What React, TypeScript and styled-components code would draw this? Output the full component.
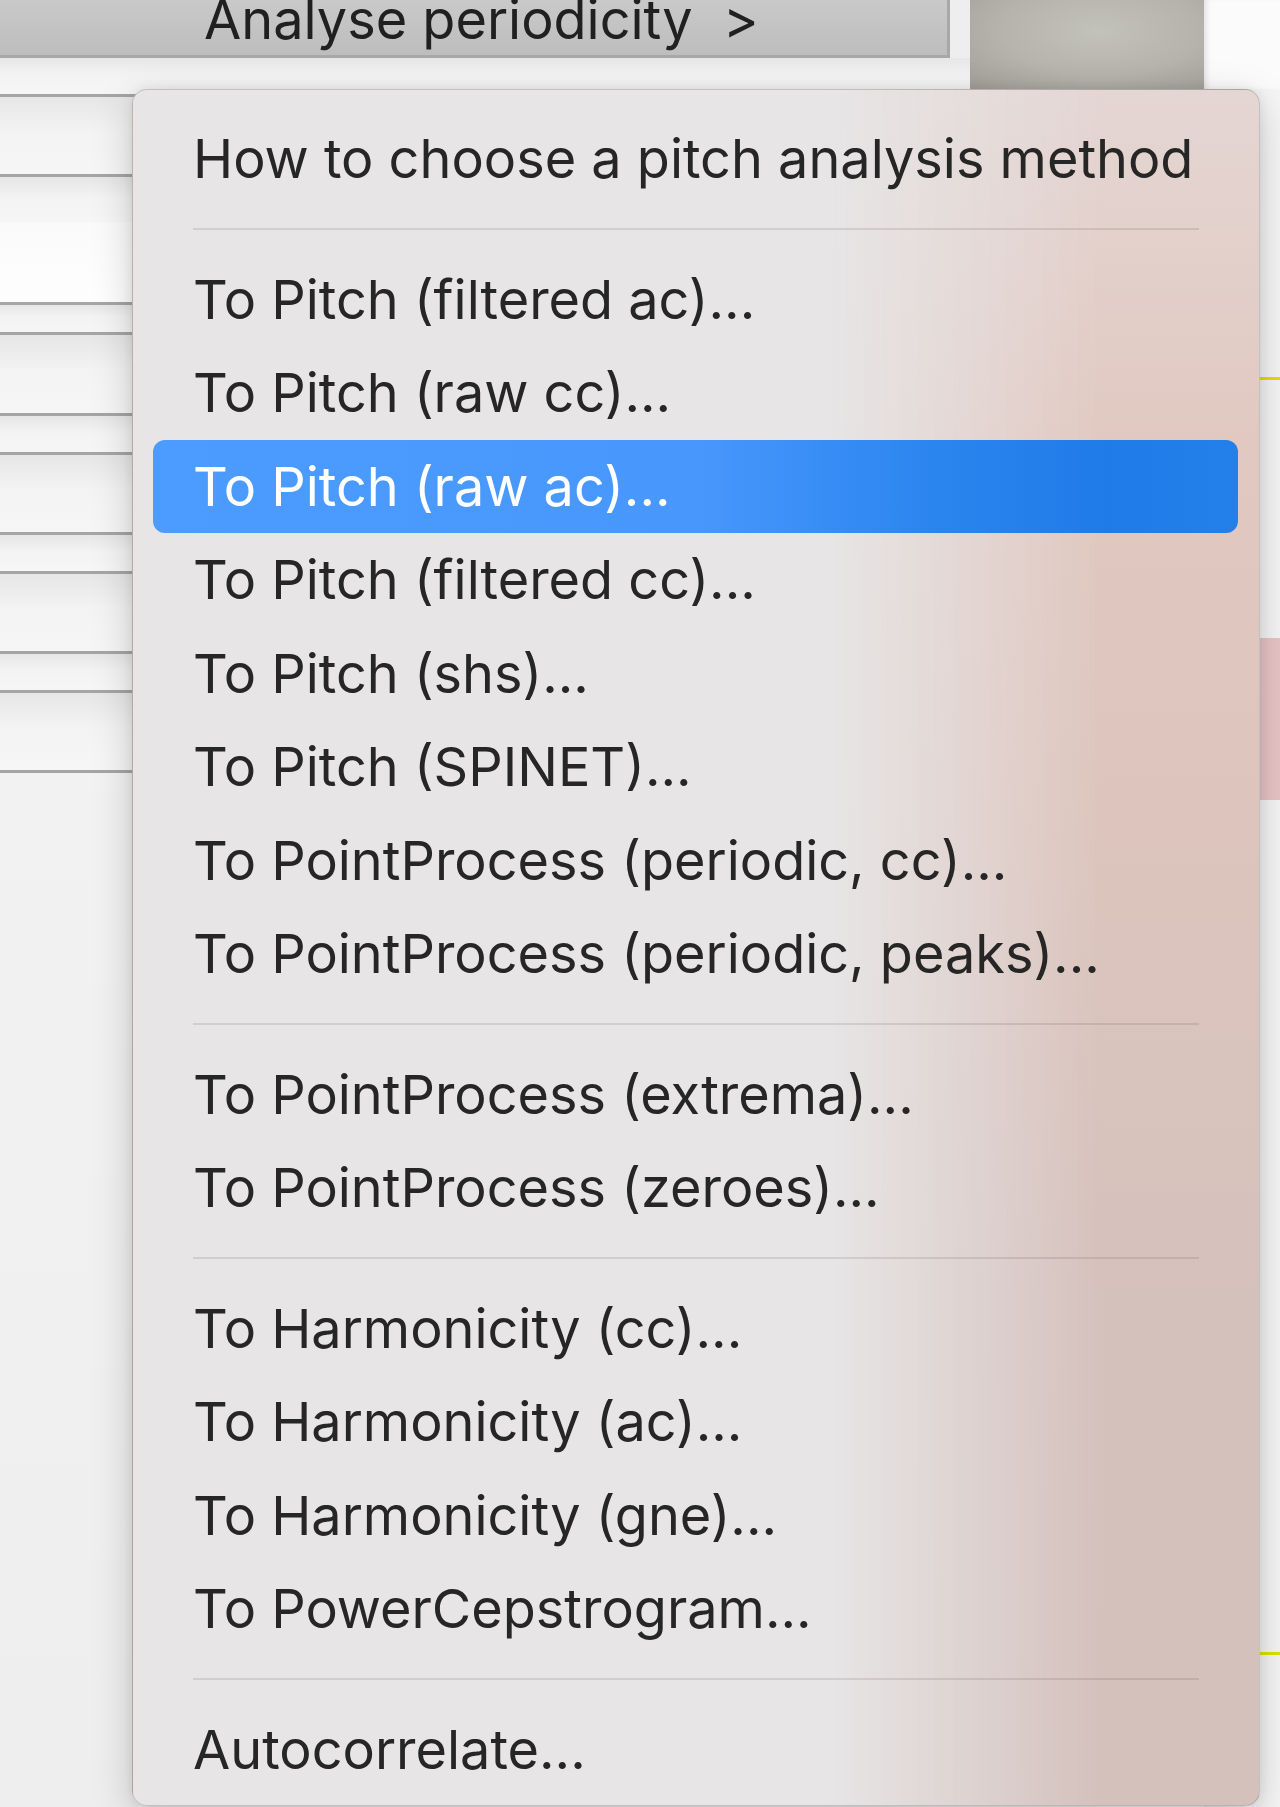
import React from "react";
import styled, { createGlobalStyle } from "styled-components";

const GlobalStyle = createGlobalStyle`
    html, body {
        margin: 0;
        padding: 0;
        background: #f0f0f0;
    }
    body {
        font-family: "Inter", "Liberation Sans", sans-serif;
        -webkit-font-smoothing: antialiased;
    }
`;

const Page = styled.div`
    position: relative;
    width: 1280px;
    height: 1807px;
    overflow: hidden;
    display: flex;
    background: #efefef;
`;

/* ---------- window behind the menu ---------- */

const LeftPane = styled.div`
    width: 970px;
    display: flex;
    flex-direction: column;
`;

const ToolRow = styled.div`
    height: 58px;
    display: flex;
    background: #eeeeee;
`;

const ToolButton = styled.div`
    box-sizing: border-box;
    width: 950px;
    height: 58px;
    overflow: hidden;
    padding-left: 204px;
    border-right: 3px solid #a8a8a8;
    border-bottom: 3px solid #a8a8a8;
    background: linear-gradient(to bottom, #c9c9c9 0%, #bdbdbd 100%);
    color: #202020;
    font-size: 54px;
    line-height: 40px;
    white-space: pre;
`;

const TableRow = styled.div<{ $h: number; $line?: boolean; $white?: boolean }>`
    box-sizing: border-box;
    height: ${(p) => p.$h}px;
    border-bottom: ${(p) => (p.$line ? "3px solid #a5a5a5" : "none")};
    background: ${(p) =>
        p.$white
            ? "linear-gradient(to bottom, #fafafa 0%, #fefefe 100%)"
            : "linear-gradient(to bottom, #e6e6e6 0%, #f3f3f3 45%, #f6f6f6 100%)"};
`;

const TableRest = styled.div`
    flex: 1;
    background: linear-gradient(to bottom, #f2f2f2 0%, #eeeeee 100%);
`;

const MidPane = styled.div`
    width: 234px;
    display: flex;
    flex-direction: column;
`;

const Tile = styled.div`
    height: 89px;
    background: radial-gradient(
        ellipse at 55% 35%,
        #c3c2ba 0%,
        #b5b3ab 55%,
        #a29f98 100%
    );
`;

const MidRest = styled.div`
    flex: 1;
    background: #eeeeee;
`;

const RightPane = styled.div`
    flex: 1;
    display: flex;
    flex-direction: column;
`;

const RightTop = styled.div`
    height: 89px;
    background: #fbfbfb;
    box-shadow: inset 6px 0 6px -4px rgba(0, 0, 0, 0.12);
`;

const Strip = styled.div`
    flex: 1;
    display: flex;
    flex-direction: column;
    background: linear-gradient(to right, #e4e4e4 0%, #f3f3f3 60%, #f6f6f6 100%);
`;

const YellowRule = styled.div<{ $top: number }>`
    margin-top: ${(p) => p.$top}px;
    height: 3px;
    background: #e2e000;
`;

const PinkBlock = styled.div<{ $top: number }>`
    margin-top: ${(p) => p.$top}px;
    height: 162px;
    background: #e8c4c5;
`;

/* ---------- the popup menu ---------- */

const Menu = styled.div`
    position: absolute;
    left: 132px;
    top: 89px;
    width: 1128px;
    box-sizing: border-box;
    padding: 22px 0 9px;
    border: 1px solid rgba(0, 0, 0, 0.16);
    border-radius: 15px;
    box-shadow: 0 12px 40px rgba(0, 0, 0, 0.18), 0 0 12px rgba(0, 0, 0, 0.08);
    background-image: linear-gradient(
            to right,
            rgba(231, 229, 230, 1) 0%,
            rgba(231, 229, 230, 1) 62%,
            rgba(231, 229, 230, 0) 86%
        ),
        linear-gradient(
            to bottom,
            #e4d6d3 0%,
            #e1c9c1 20%,
            #ddc5bd 42%,
            #d5c1bc 70%,
            #d4c1bc 100%
        );
    display: flex;
    flex-direction: column;
`;

const Item = styled.div<{ $active?: boolean }>`
    height: 93.5px;
    margin: 0 21px 0 20px;
    padding-left: 40px;
    border-radius: 12px;
    font-size: 54px;
    line-height: 93.5px;
    white-space: nowrap;
    color: ${(p) => (p.$active ? "#ffffff" : "#262626")};
    background: ${(p) =>
        p.$active
            ? "linear-gradient(to right, #4c9cff 0%, #4897fc 50%, #2b85ef 72%, #1f7be8 88%, #2380ea 100%)"
            : "transparent"};
`;

const Separator = styled.div`
    height: 47px;
    display: flex;
    align-items: center;
    padding: 0 60px;

    &::after {
        content: "";
        flex: 1;
        height: 2px;
        background: rgba(60, 40, 40, 0.12);
    }
`;

type Entry = { label: string; active?: boolean } | "sep";

const entries: Entry[] = [
    { label: "How to choose a pitch analysis method" },
    "sep",
    { label: "To Pitch (filtered ac)..." },
    { label: "To Pitch (raw cc)..." },
    { label: "To Pitch (raw ac)...", active: true },
    { label: "To Pitch (filtered cc)..." },
    { label: "To Pitch (shs)..." },
    { label: "To Pitch (SPINET)..." },
    { label: "To PointProcess (periodic, cc)..." },
    { label: "To PointProcess (periodic, peaks)..." },
    "sep",
    { label: "To PointProcess (extrema)..." },
    { label: "To PointProcess (zeroes)..." },
    "sep",
    { label: "To Harmonicity (cc)..." },
    { label: "To Harmonicity (ac)..." },
    { label: "To Harmonicity (gne)..." },
    { label: "To PowerCepstrogram..." },
    "sep",
    { label: "Autocorrelate..." },
];

const rows = [
    { h: 39, line: true },
    { h: 80, line: true },
    { h: 45 },
    { h: 83, line: true, white: true },
    { h: 30, line: true },
    { h: 81, line: true },
    { h: 39, line: true },
    { h: 80, line: true },
    { h: 39, line: true },
    { h: 80, line: true },
    { h: 39, line: true },
    { h: 80, line: true },
];

export default function App(): JSX.Element {
    return (
        <>
            <GlobalStyle />
            <Page>
                <LeftPane>
                    <ToolRow>
                        <ToolButton>{"Analyse periodicity  >"}</ToolButton>
                    </ToolRow>
                    {rows.map((r, i) => (
                        <TableRow key={i} $h={r.h} $line={r.line} $white={r.white} />
                    ))}
                    <TableRest />
                </LeftPane>
                <MidPane>
                    <Tile />
                    <MidRest />
                </MidPane>
                <RightPane>
                    <RightTop />
                    <Strip>
                        <YellowRule $top={288} />
                        <PinkBlock $top={258} />
                        <YellowRule $top={852} />
                    </Strip>
                </RightPane>

                <Menu>
                    {entries.map((e, i) =>
                        e === "sep" ? (
                            <Separator key={i} />
                        ) : (
                            <Item key={i} $active={e.active}>
                                {e.label}
                            </Item>
                        )
                    )}
                </Menu>
            </Page>
        </>
    );
}
